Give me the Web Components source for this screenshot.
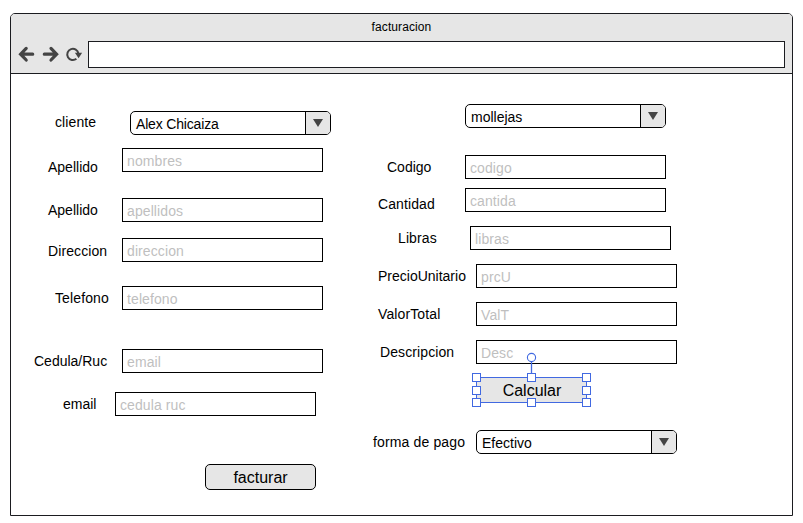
<!DOCTYPE html>
<html lang="es">
<head>
<meta charset="utf-8">
<title>facturacion</title>
<style>
html,body{margin:0;background:#fff;font-family:"Liberation Sans",Arial,sans-serif;font-size:14px;color:#000}
body{width:803px;height:523px;overflow:hidden;padding:13px 10px 7px;box-sizing:border-box}
</style>
</head>
<body>
<invoice-page></invoice-page>
<script>
class BaseElement extends HTMLElement {
  render(html) {
    if (!this.shadowRoot) this.attachShadow({ mode: 'open' });
    this.shadowRoot.innerHTML = html;
  }
}

class NavIcons extends BaseElement {
  connectedCallback() {
    this.render(`<style>:host{display:block;width:77px;height:27px}svg{display:block}</style>
    <svg width="77" height="27" viewBox="11 41 77 27" fill="none" stroke="#444">
      <g stroke-width="3.2" stroke-linecap="round" stroke-linejoin="miter">
        <path d="M32.7 54.2H21.5M26.2 48.4L20.6 54.2L26.2 60"/>
        <path d="M44.3 54.2H55.5M51 48.4L56.6 54.2L51 60"/>
      </g>
      <path d="M76.4 58.8A5.6 5.6 0 1 1 78.4 53.6" stroke-width="2"/>
      <path d="M74.9 52.8H82.1L78.6 58.3Z" fill="#444" stroke="none"/>
    </svg>`);
  }
}
customElements.define('nav-icons', NavIcons);

class BrowserFrame extends BaseElement {
  connectedCallback() {
    this.render(`<style>
      :host{display:flex;flex-direction:column;box-sizing:border-box;width:783px;height:503px;border:1px solid #1b1c20;border-radius:5px 5px 0 0;background:#fff}
      header{height:59px;flex:none;background:#e6e6e6;border-bottom:1px solid #1b1c20;border-radius:4px 4px 0 0}
      .title{height:27px;line-height:27px;text-align:center;font-size:12px;letter-spacing:.1px}
      .bar{display:flex}
      .address{box-sizing:border-box;width:697px;height:27px;border:1px solid #1b1c20;background:#fff}
      main{flex:1;display:flex}
    </style>
    <header><div class="title">${this.getAttribute('heading')}</div>
    <div class="bar"><nav-icons></nav-icons><div class="address"></div></div></header>
    <main><slot></slot></main>`);
  }
}
customElements.define('browser-frame', BrowserFrame);

class TextBox extends BaseElement {
  connectedCallback() {
    this.render(`<style>:host{display:block;box-sizing:border-box;width:201px;height:24px;border:1px solid #000;padding-left:4px;line-height:24px;color:#bfbfbf;background:#fff;white-space:nowrap;letter-spacing:.1px}</style><slot></slot>`);
  }
}
customElements.define('text-box', TextBox);

class SelectBox extends BaseElement {
  connectedCallback() {
    this.render(`<style>
      :host{display:flex;box-sizing:border-box;width:201px;height:24px;border:1px solid #000;border-radius:5px;line-height:24px;background:#fff;overflow:hidden}
      .value{flex:1;padding-left:5px;white-space:nowrap;letter-spacing:${this.getAttribute('spacing') || 0}px}
      .arrow{width:24px;background:#e6e6e6;border-left:1px solid #000}
      svg{display:block}
    </style><div class="value"><slot></slot></div>
    <div class="arrow"><svg width="24" height="22"><path d="M7 7H17L12 15Z" fill="#444"/></svg></div>`);
  }
}
customElements.define('select-box', SelectBox);

class PushButton extends BaseElement {
  connectedCallback() {
    this.render(`<style>
      :host{display:block;position:relative;box-sizing:border-box;width:111px;height:26px;border:1px solid #000;border-radius:5px;background:#e6e6e6;line-height:25px;font-size:16px;text-align:center}
      :host([selected]){border-color:#4169e1;border-radius:0;padding-left:1px}
      svg{display:none}
      :host([selected]) svg{display:block;position:absolute;left:-6px;top:-26px}
    </style><slot></slot>
    <svg width="121" height="58" fill="#fff" stroke="#4169e1">
      <path d="M60.5 10V22" stroke-width="1.3"/>
      <circle cx="60.5" cy="5.5" r="4.1" stroke-width="1.1"/>
      ${[[1,21],[56,21],[111,21],[1,34],[111,34],[1,46],[56,46],[111,46]]
        .map(([x, y]) => `<rect x="${x + .5}" y="${y + .5}" width="8" height="8"/>`).join('')}
    </svg>`);
  }
}
customElements.define('push-button', PushButton);

class FormRow extends BaseElement {
  connectedCallback() {
    const n = (name) => `${this.getAttribute(name) || 0}px`;
    this.render(`<style>
      :host{display:flex;align-items:flex-start;height:${this.getAttribute('height') || 24}px;margin-top:${n('gap')};padding-left:${n('indent')}}
      .label{width:${n('label-width')};height:24px;line-height:24px;margin-top:${n('shift')};white-space:nowrap;letter-spacing:${n('spacing')}}
    </style><div class="label">${this.getAttribute('label') || ''}</div><slot></slot>`);
  }
}
customElements.define('form-row', FormRow);

class FormColumn extends BaseElement {
  connectedCallback() {
    this.render(`<style>:host{display:flex;flex-direction:column}</style><slot></slot>`);
  }
}
customElements.define('form-column', FormColumn);

class InvoicePage extends BaseElement {
  connectedCallback() {
    this.render(`<style>:host{display:block}form-column{width:330px}form-column+form-column{width:340px;margin-left:20px}</style>
    <browser-frame heading="facturacion">
      <form-column>
        <form-row gap="37" indent="44" label-width="75" shift="-1" spacing=".1" label="cliente"><select-box spacing="-.17">Alex Chicaiza</select-box></form-row>
        <form-row gap="13" indent="37" label-width="74" shift="7" label="Apellido"><text-box>nombres</text-box></form-row>
        <form-row gap="26" indent="37" label-width="74" shift="0" label="Apellido"><text-box>apellidos</text-box></form-row>
        <form-row gap="16" indent="37" label-width="74" shift="1" spacing=".1" label="Direccion"><text-box>direccion</text-box></form-row>
        <form-row gap="24" indent="44" label-width="67" shift="0" spacing=".12" label="Telefono"><text-box>telefono</text-box></form-row>
        <form-row gap="39" indent="23" label-width="88" shift="0" label="Cedula/Ruc"><text-box>email</text-box></form-row>
        <form-row gap="19" indent="52" label-width="52" shift="0" label="email"><text-box>cedula ruc</text-box></form-row>
        <form-row gap="48" indent="194" height="26"><push-button>facturar</push-button></form-row>
      </form-column>
      <form-column>
        <form-row gap="30" indent="104"><select-box>mollejas</select-box></form-row>
        <form-row gap="27" indent="26" label-width="78" shift="0" label="Codigo"><text-box>codigo</text-box></form-row>
        <form-row gap="9" indent="17" label-width="87" shift="4" spacing=".1" label="Cantidad"><text-box>cantida</text-box></form-row>
        <form-row gap="14" indent="37" label-width="72" shift="0" spacing=".1" label="Libras"><text-box>libras</text-box></form-row>
        <form-row gap="14" indent="17" label-width="98" shift="0" label="PrecioUnitario"><text-box>prcU</text-box></form-row>
        <form-row gap="14" indent="17" label-width="98" shift="0" spacing=".12" label="ValorTotal"><text-box>ValT</text-box></form-row>
        <form-row gap="14" indent="19" label-width="96" shift="0" spacing=".1" label="Descripcion"><text-box>Desc</text-box></form-row>
        <form-row gap="13" indent="115" height="26"><push-button selected>Calcular</push-button></form-row>
        <form-row gap="27" indent="12" label-width="103" shift="0" spacing=".14" label="forma de pago"><select-box>Efectivo</select-box></form-row>
      </form-column>
    </browser-frame>`);
  }
}
customElements.define('invoice-page', InvoicePage);
</script>
</body>
</html>
